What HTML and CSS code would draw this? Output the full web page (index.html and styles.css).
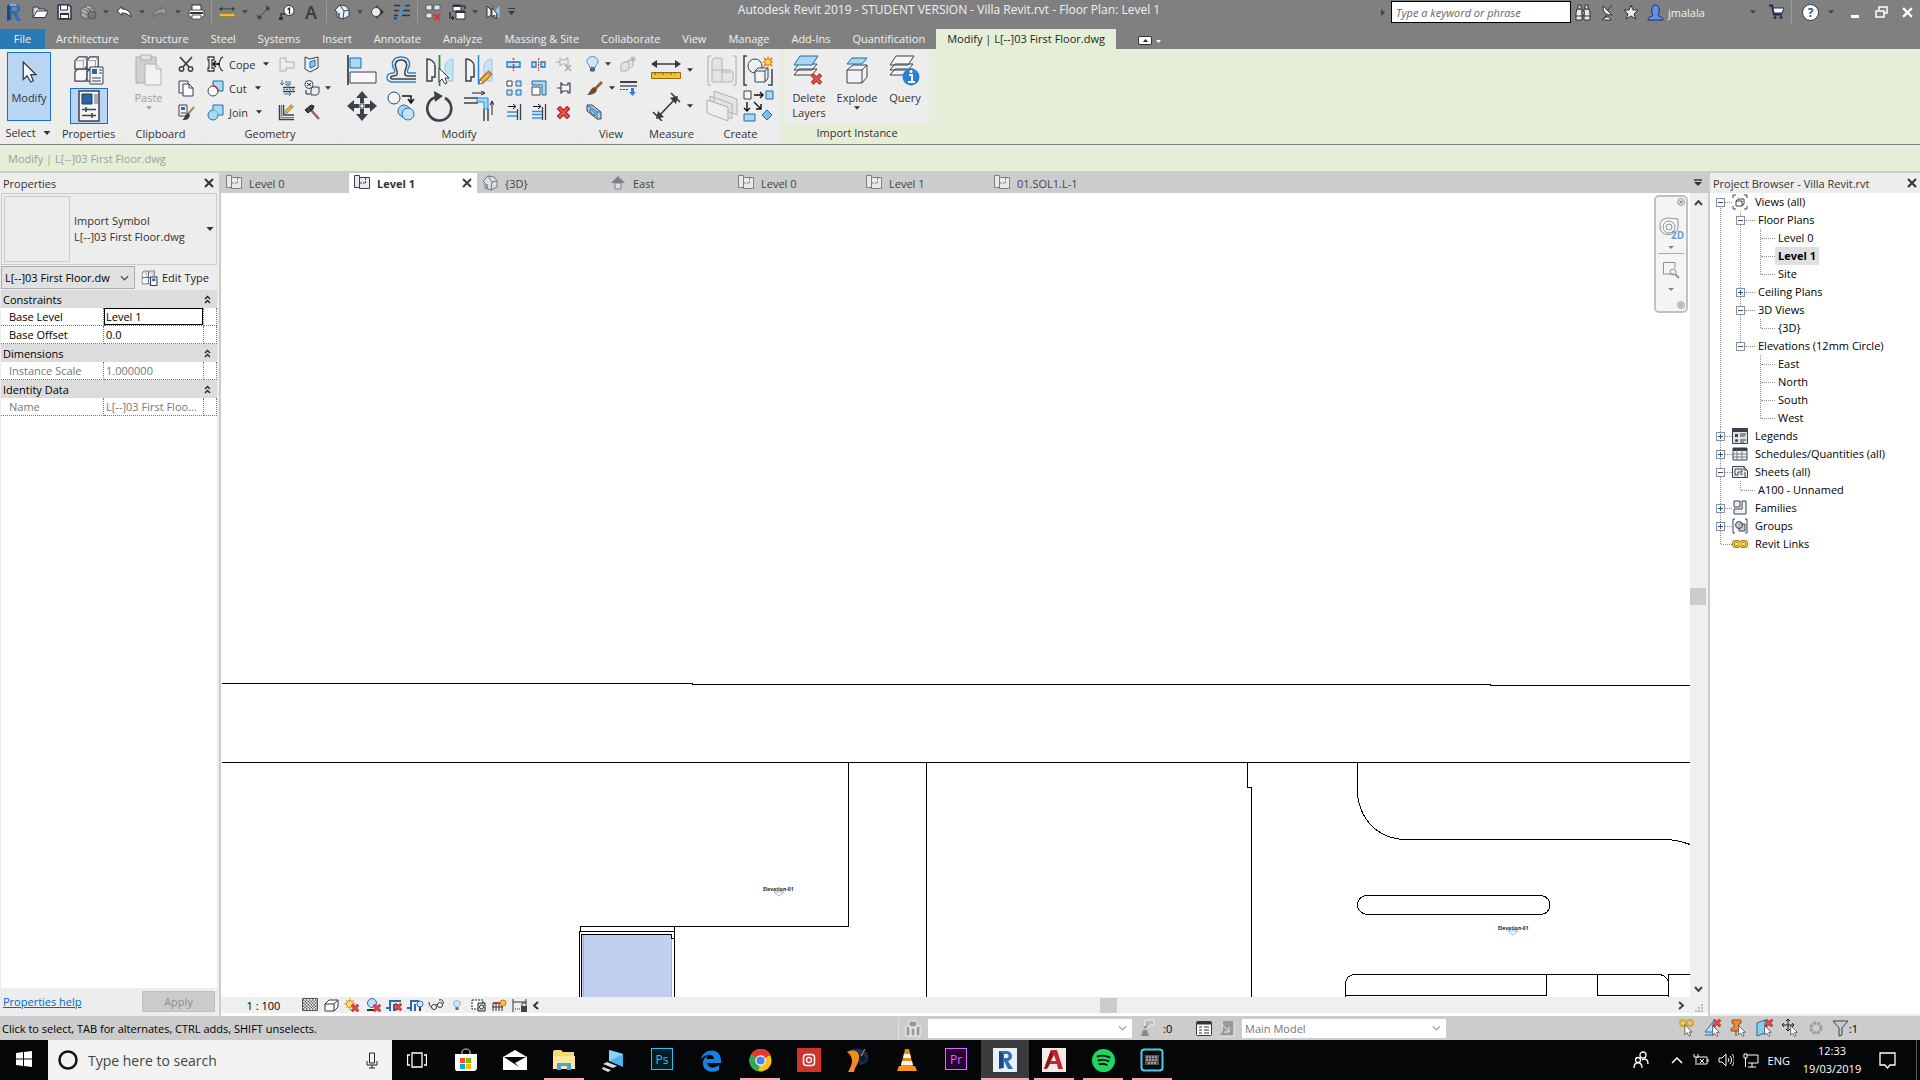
FILE: index.html
```
<!DOCTYPE html>
<html lang="en">
<head>
<meta charset="utf-8">
<title>Autodesk Revit 2019 - Villa Revit.rvt</title>
<link rel="stylesheet" href="styles.css">
</head>
<body>

<!-- shared icons -->
<svg class="defs" aria-hidden="true">
    <symbol id="caret" viewBox="0 0 7 4"><path d="M0 0h7L3.5 4z" fill="currentColor"/></symbol>
    <symbol id="cross" viewBox="0 0 10 10"><path d="M1 1l8 8M9 1l-8 8" fill="none" stroke="currentColor" stroke-width="2"/></symbol>
    <symbol id="down" viewBox="0 0 10 6"><path d="M1 1l4 4 4-4" fill="none" stroke="currentColor" stroke-width="1.5"/></symbol>
    <symbol id="fold" viewBox="0 0 7 9"><path d="M1 4l2.5-2.500L6 4M1 8l2.500-2.500L6 8" fill="none" stroke="#222" stroke-width="1.400"/></symbol>
    <symbol id="plan" viewBox="0 0 16 16"><path d="M5.5 3.5V.5H.5v12h5" fill="#e8e8e8" stroke="currentColor"/><path d="M5.5 2.5h10v11h-10z" fill="#e8eaec" stroke="currentColor"/><path d="M6 8h6M11.5 3v5" stroke="currentColor" stroke-dasharray="2 1"/></symbol>
    <symbol id="cubes" viewBox="0 0 30 30"><g fill="#f4f6f8" stroke="#3b414d" stroke-width="1.300"><path d="M5 1h9v10l-3 3H1V5z"/><path d="M17 1h9v10l-3 3h-9V5z"/><path d="M4 14h10v10l-2 3H1V17z"/><path d="M17 14h9v10l-3 3h-9V17z"/></g><path d="M1 5h9V14M14 5h9v9M14 1l-4 4M26 1l-3 4" fill="none" stroke="#8b929c"/></symbol>
    <symbol id="rx" viewBox="0 0 10 10"><path d="M1 1l8 8M9 1l-8 8" stroke="#a01818" stroke-width="3.500"/><path d="M1.500 1.500l7 7M8.500 1.500l-7 7" stroke="#f15048" stroke-width="2"/></symbol>
    <symbol id="arrow" viewBox="0 0 12 18"><path d="M1 1v14l3-3 3 5 2-1-2-5h4z" fill="#fff" stroke="#333a45"/></symbol>
    <symbol id="house" viewBox="0 0 16 16"><path d="M1 6l5-5 6 1 3 4v6l-6 3-6-2V8z" fill="#e8edf2" stroke="#3b414d"/><path d="M1 6l5-5 4 6-1 8M10 7l5-1" fill="none" stroke="#3b414d"/><path d="M4 13V9l2 0v5" fill="#4a78a8"/></symbol>
    <symbol id="dim" viewBox="0 0 30 30"><path d="M2 21l9 9M20 2l9 9M7 26L25 7" fill="none" stroke="currentColor" stroke-width="1.600"/><path d="M5 28l2-8 6 6zM27 5l-2 8-6-6z" fill="currentColor"/></symbol>
    <symbol id="ruler" viewBox="0 0 30 20"><path d="M1 4h28" stroke="currentColor" stroke-width="1.500"/><path d="M0 4l6-4v8zM30 4l-6-4v8z" fill="currentColor"/><path d="M.5 12.500h29v6H.5z" fill="#f2c230" stroke="#9a6a10"/><path d="M4 12v3M8 12v2M12 12v3M16 12v2M20 12v3M24 12v2" stroke="#7a5510"/></symbol>
    <symbol id="pencil" viewBox="0 0 14 14"><path d="M1 13l1-4 8-8 3 3-8 8z" fill="#f5b43a" stroke="#8a5a18"/><path d="M10 1l3 3-2 2-3-3z" fill="#e98a4c"/><path d="M1 13l1-4 3 3z" fill="#fff" stroke="#8a5a18" stroke-width=".7"/></symbol>
    <symbol id="bulb" viewBox="0 0 14 18"><path d="M4 12C4 9 1 9 1 5.500a6 5 0 0 1 12 0C13 9 10 9 10 12z" fill="#cfe7fb" stroke="#4c83c4"/><path d="M5 13h4v3H5z" fill="#777" stroke="#3b414d"/></symbol>
</svg>

<header class="titlebar">
    <div class="quick">
        <button class="logo" aria-label="Revit"><svg width="18" height="20" viewBox="0 0 18 20"><path d="M4 2h7c5 0 6 8 1 9l4 8h-4L8 12H7v6H4z" fill="#2f6fb5"/><path d="M4 2L2 4v15l3-1V5z" fill="#174a86"/><path d="M7 5h4c2 0 2 4 0 4H7z" fill="#808080"/><path d="M4 2h7l1 2H5z" fill="#6fb0e6"/></svg></button>
        <button aria-label="Open"><svg width="17" height="14" viewBox="0 0 17 14"><path d="M1 12V2h5l1 2h6v2" fill="#cfd6dd" stroke="#333a45"/><path d="M1 12.500L5 6h11l-3 6.500z" fill="#fff" stroke="#333a45"/></svg></button>
        <button aria-label="Save"><svg width="15" height="16" viewBox="0 0 15 16"><path d="M1 1h11l2 2v12H1z" fill="#dfe5eb" stroke="#2d3440" stroke-width="1.500"/><path d="M3.500 1h7v5h-7z" fill="#fff" stroke="#2d3440"/><path d="M3 9h9v6H3z" fill="#2d3440"/><path d="M4 11h7v3H4z" fill="#fff"/></svg></button>
        <button aria-label="Synchronize"><svg width="17" height="16" viewBox="0 0 17 16"><path d="M1 4l7-3 6 3v8l-7 3-6-3z" fill="#b4b4b4" stroke="#5e5e5e"/><path d="M1 4l6 3 7-3M7 7v8M4 3l6 2v4M1 8l6 3" fill="none" stroke="#666"/><circle cx="12" cy="11" r="4" fill="#777" stroke="#555"/></svg></button>
        <button class="drop" aria-label="Synchronize menu"><svg width="6" height="4"><use href="#caret"/></svg></button>
        <button aria-label="Undo"><svg width="16" height="12" viewBox="0 0 16 12"><path d="M1 5l5-4.500V3c5 0 9 3 9 8-3-3-5-4-9-4v2.500z" fill="#fff" stroke="#2d3440"/></svg></button>
        <button class="drop" aria-label="Undo menu"><svg width="6" height="4"><use href="#caret"/></svg></button>
        <button aria-label="Redo"><svg width="16" height="12" viewBox="0 0 16 12"><path d="M15 5L10 .5V3C5 3 1 6 1 11c3-3 5-4 9-4v2.500z" fill="#999" stroke="#666"/></svg></button>
        <button class="drop" aria-label="Redo menu"><svg width="6" height="4"><use href="#caret"/></svg></button>
        <button aria-label="Print"><svg width="17" height="16" viewBox="0 0 17 16"><path d="M4 1h9v6H4z" fill="#fff" stroke="#333"/><path d="M1 6h15v7H1z" fill="#fff" stroke="#444"/><path d="M2 9h13" stroke="#333" stroke-width="2"/><path d="M4 11h9v4H4z" fill="#fff" stroke="#555"/></svg></button>
        <i class="sep"></i>
        <button aria-label="Measure"><svg class="ink" width="16" height="12" viewBox="0 0 30 20"><use href="#ruler"/></svg></button>
        <button class="drop" aria-label="Measure menu"><svg width="6" height="4"><use href="#caret"/></svg></button>
        <button aria-label="Aligned dimension"><svg class="ink" width="16" height="16"><use href="#dim"/></svg></button>
        <button aria-label="Tag"><svg width="16" height="15" viewBox="0 0 16 15"><path d="M2 13V9h4" fill="none" stroke="#2d3440" stroke-width="1.300"/><path d="M0 12h4v3H0z" fill="#2d3440"/><circle cx="10" cy="5.500" r="5" fill="#fff" stroke="#2d3440"/><path d="M8.500 4.500L10.500 3v6" fill="none" stroke="#222" stroke-width="1.300"/></svg></button>
        <button class="letter">A</button>
        <i class="sep"></i>
        <button aria-label="3D view"><svg width="16" height="16"><use href="#house"/></svg></button>
        <button class="drop" aria-label="3D menu"><svg width="6" height="4"><use href="#caret"/></svg></button>
        <button aria-label="Section"><svg width="14" height="14" viewBox="0 0 14 14"><path d="M5 0l8 7-8 7z" fill="#2d3440"/><circle cx="5" cy="7" r="4.500" fill="#e8ecef" stroke="#444"/></svg></button>
        <button aria-label="Thin lines"><svg width="18" height="16" viewBox="0 0 18 16"><path d="M1 1.500h6M11 1.500h6M1 6.500h5M10 6.500h7M1 11.500h4M9 11.500h8M1 14.500h3" stroke="#2d3440" stroke-width="1.500"/><path d="M12 0L5 16" stroke="#3d9bf0" stroke-width="1.500"/></svg></button>
        <i class="sep"></i>
        <button aria-label="Close hidden"><svg width="16" height="17" viewBox="0 0 16 17"><path d="M1 1h6v5H1zM9 1h6v5H9zM1 9h6v5H1z" fill="#e2e6ea" stroke="#555d68"/><path d="M9 10l6 6M15 10l-6 6" stroke="#e03030" stroke-width="2"/></svg></button>
        <button aria-label="Switch windows"><svg width="17" height="17" viewBox="0 0 17 17"><path d="M4 1h8v6H4zM7 7h9v8H7z" fill="#fff" stroke="#2d3440"/><path d="M4 2h8M7 8h9" stroke="#2d3440" stroke-width="2"/><path d="M1 8v6h4M3 12l2 2-2 2M13 2h3v3" fill="none" stroke="#111"/></svg></button>
        <button class="drop" aria-label="Switch menu"><svg width="6" height="4"><use href="#caret"/></svg></button>
        <button aria-label="Mirror"><svg width="15" height="15" viewBox="0 0 15 15"><path d="M1 1l4 4v5l-4 3z" fill="#eee" stroke="#2d3440"/><path d="M13.500 1l-4 4v5l4 3z" fill="#8fc7ea"/><path d="M7 0v15" stroke="#2c8a2c"/><path d="M6 3v9l2-2 2 4 1-1-1-3h2z" fill="#fff" stroke="#333"/></svg></button>
        <button class="drop" aria-label="Customize"><svg width="9" height="8" viewBox="0 0 9 8"><path d="M1 .5h7" stroke="#333a45"/><path d="M1 3h7L4.500 7z" fill="#333a45"/></svg></button>
    </div>
    <div class="title">Autodesk Revit 2019 - STUDENT VERSION - Villa Revit.rvt - Floor Plan: Level 1</div>
    <div class="account">
        <svg width="4" height="7" viewBox="0 0 4 7"><path d="M0 0l4 3.500L0 7z" fill="#444"/></svg>
        <input type="text" placeholder="Type a keyword or phrase" aria-label="Search help">
        <button aria-label="Search"><svg width="16" height="17" viewBox="0 0 16 17"><path d="M2 5h5v11H1V9zM9 5h5l1 4v7H9z" fill="#e8e8ea" stroke="#2d3440"/><path d="M3 1h3v4H3zM10 1h3v4h-3zM7 7h2v4H7z" fill="#d9dce0" stroke="#2d3440"/><path d="M1 12h6M9 12h6" stroke="#2d3440"/></svg></button>
        <button aria-label="Communication center"><svg width="15" height="17" viewBox="0 0 15 17"><path d="M3 2c0 7 3 9 9 9z" fill="#f2f2f2" stroke="#2d3440"/><path d="M7 7l5-6M7 10l-3 5M2 16h9l-2-3H5z" fill="#eee" stroke="#2d3440"/></svg></button>
        <button aria-label="Favorites"><svg width="16" height="16" viewBox="0 0 16 16"><path d="M8 1l2 5h5l-4 4 2 5-5-3-5 3 2-5-4-4h5z" fill="#e9ebee" stroke="#2d3440"/></svg></button>
        <button class="user"><svg width="17" height="17" viewBox="0 0 17 17"><path d="M1 16c0-4 5-3 5-5C4 9 4 1 8.500 1S13 9 11 11c0 2 5 1 5 5z" fill="#5f91ea" stroke="#1c2a5c"/></svg>jmalala<svg class="far" width="6" height="4"><use href="#caret"/></svg></button>
        <button aria-label="App store"><svg width="17" height="16" viewBox="0 0 17 16"><path d="M1 1.500h3l2 9h8" fill="none" stroke="#1c2a4c" stroke-width="2"/><path d="M5 4h11l-2 5H6z" fill="#fff" stroke="#1c2a6c"/><circle cx="7" cy="13.500" r="1.500" fill="#1c2a6c"/><circle cx="13" cy="13.500" r="1.500" fill="#1c2a6c"/></svg></button>
        <i class="sep"></i>
        <button class="help" aria-label="Help">?</button>
        <svg class="tiny" width="6" height="4"><use href="#caret"/></svg>
        <button class="win" aria-label="Minimize"><svg width="9" height="12"><path d="M0 9h8v3H0z" fill="#fff"/></svg></button>
        <button class="win" aria-label="Restore"><svg width="13" height="12" viewBox="0 0 13 12"><path d="M4 4V1h8v6H9M1 5h8v6H1z" fill="none" stroke="#fff" stroke-width="1.500"/></svg></button>
        <button class="win" aria-label="Close"><svg class="white" width="11" height="11"><use href="#cross"/></svg></button>
    </div>
</header>

<nav class="ribbon-tabs">
    <button class="file">File</button>
    <button>Architecture</button>
    <button>Structure</button>
    <button>Steel</button>
    <button>Systems</button>
    <button>Insert</button>
    <button>Annotate</button>
    <button>Analyze</button>
    <button>Massing &amp; Site</button>
    <button>Collaborate</button>
    <button>View</button>
    <button>Manage</button>
    <button>Add-Ins</button>
    <button>Quantification</button>
    <button class="active">Modify | L[--]03 First Floor.dwg</button>
    <button class="collapse" aria-label="Minimize ribbon"><svg width="24" height="9" viewBox="0 0 24 9"><rect x=".5" y=".5" width="13" height="8" rx="1.500" fill="#fff" stroke="#333"/><path d="M5 6h5L7.500 3z" fill="#222"/><path d="M18 4h5l-2.500 3z" fill="#fff"/></svg></button>
</nav>

<section class="ribbon">
    <div class="panel select">
        <div class="body">
            <button class="modify"><svg width="15" height="24"><use href="#arrow"/></svg>Modify</button>
        </div>
        <h3>Select <svg width="8" height="4"><use href="#caret"/></svg></h3>
    </div>
    <div class="panel props">
        <div class="body two">
            <button aria-label="Type properties"><svg width="30" height="30" viewBox="0 0 30 30"><use href="#cubes" width="28" height="30"/><path d="M16 12h13v17H16z" fill="#f4f4f4" stroke="#3b414d"/><path d="M18 14h5v5h-5z" fill="#2a65a8"/><path d="M25 15h3M25 18h3M18 23h9M18 26h9" stroke="#3b414d"/></svg></button>
            <button class="on" aria-label="Properties"><svg width="22" height="32" viewBox="0 0 22 32"><path d="M1 1h20v30H1z" fill="#f4f4f4" stroke="#3b414d" stroke-width="1.500"/><path d="M4 4h10v10H4z" fill="#2a65a8" stroke="#274059"/><path d="M16 4h4v10h-4z" fill="#a8aeb6"/><path d="M4 19.500h14M4 25.500h14M8 17v5M14 23v5" stroke="#3b414d" stroke-width="1.500"/></svg></button>
        </div>
        <h3>Properties</h3>
    </div>
    <div class="panel clip">
        <div class="body">
            <button class="tall off"><svg width="28" height="32" viewBox="0 0 28 32"><path d="M1 3h20v26H1z" fill="#d0d0d0" stroke="#aaa"/><path d="M6 1h10v5H6z" fill="#e4e4e4" stroke="#aaa"/><path d="M10 10h11l5 5v16H10z" fill="#f2f2f2" stroke="#b4b4b4"/><path d="M21 10v5h5" fill="none" stroke="#b4b4b4"/></svg>Paste<svg width="6" height="4"><use href="#caret"/></svg></button>
            <div class="three">
                <button aria-label="Cut to clipboard"><svg width="16" height="16" viewBox="0 0 16 16"><path d="M2 1l9 10M14 1L5 11" stroke="#3b414d" stroke-width="1.800"/><circle cx="3.500" cy="13" r="2.200" fill="none" stroke="#3b414d" stroke-width="1.500"/><circle cx="12.500" cy="13" r="2.200" fill="none" stroke="#3b414d" stroke-width="1.500"/></svg></button>
                <button aria-label="Copy to clipboard"><svg width="16" height="17" viewBox="0 0 16 17"><path d="M1 1h9v12H1z" fill="#eef0f2" stroke="#3b414d"/><path d="M5 4h6l4 4v8H5z" fill="#fafafa" stroke="#3b414d"/><path d="M11 4v4h4" fill="none" stroke="#3b414d"/></svg></button>
                <button aria-label="Match type"><svg width="17" height="17" viewBox="0 0 17 17"><path d="M1 1h8v11H1z" fill="#f4f4f4" stroke="#3b414d"/><path d="M3 3h4v3H3z" fill="#2a75b8"/><path d="M3 9h5" stroke="#3b414d"/><path d="M16 3l-6 7" stroke="#b98342" stroke-width="2"/><path d="M10 9l2 2c-1 5-4 5-8 5 3-1 2-5 6-7z" fill="#3b414d"/></svg></button>
            </div>
        </div>
        <h3>Clipboard</h3>
    </div>
    <div class="panel geometry">
        <div class="body">
            <div class="three named">
                <button><svg width="17" height="16" viewBox="0 0 17 16"><path d="M1 1h6v3H5v8h2v3H1v-3h1V4H1zM16 1c-4 1-2 5-5 7 3 2 1 6 5 7" fill="#f4f4f4" stroke="#3b414d" stroke-width="1.300"/><path d="M13 8H6M9 5L6 8l3 3" fill="none" stroke="#000" stroke-width="1.300"/></svg>Cope<svg width="6" height="4"><use href="#caret"/></svg></button>
                <button><svg width="17" height="17" viewBox="0 0 17 17"><path d="M6 1h10v10H6z" fill="#a8d9f3" stroke="#1d6ca8"/><circle cx="6" cy="11" r="5" fill="#fff" stroke="#444"/><path d="M6 6a5 5 0 0 1 5 5" fill="none" stroke="#e02020" stroke-width="1.500"/></svg>Cut<svg width="6" height="4"><use href="#caret"/></svg></button>
                <button><svg width="17" height="17" viewBox="0 0 17 17"><path d="M6 1h10v10h-5A5 5 0 1 1 6 6z" fill="#a8d9f3" stroke="#1d6ca8"/><path d="M6 6a5 5 0 0 1 5 5" fill="none" stroke="#6cb2dc"/></svg>Join<svg width="6" height="4"><use href="#caret"/></svg></button>
            </div>
            <div class="three">
                <button aria-label="Wall joins"><svg width="16" height="15" viewBox="0 0 16 15"><path d="M1 1h6v4h8v6H7v3H1z" fill="#ececec" stroke="#b0b0b0"/></svg></button>
                <button aria-label="Split face"><svg width="16" height="16" viewBox="0 0 16 16"><path d="M3 0v5M1 3l2 2 2-2M7 1v4h4V1M9 1v4" fill="none" stroke="#2878c8"/><path d="M4 7.500h12M4 11.500h12" stroke="#3b414d" stroke-width="1.300"/><path d="M4 9.500h12" stroke="#777" stroke-dasharray="2 1"/><path d="M5 14h7M10 12l2 2-2 2" fill="none" stroke="#2878c8"/></svg></button>
                <button aria-label="Paint"><svg width="17" height="17" viewBox="0 0 17 17"><path d="M1.500 1v14.500H16M5.500 1v10H16" fill="none" stroke="#3b414d" stroke-width="1.500"/><path d="M3.500 1v12.500H16" fill="none" stroke="#3492dd"/><use href="#pencil" x="6" y="0" width="10" height="10"/></svg></button>
            </div>
            <div class="three">
                <button aria-label="Beam joins"><svg width="15" height="17" viewBox="0 0 15 17"><path d="M1 1l5 2 4-1 4-1v11l-8 4-5-3z" fill="#e8edf2" stroke="#3b414d"/><path d="M6 6l5-2v6l-5 2z" fill="#8ec9ee" stroke="#1d6ca8"/></svg></button>
                <button aria-label="Demolish"><svg width="16" height="17" viewBox="0 0 16 17"><circle cx="5" cy="4.500" r="4" fill="#fff" stroke="#3b414d"/><path d="M3 3l4 3M7 3L3 6M2 10v4h4" fill="none" stroke="#222"/><path d="M7 9l2-2h6v6l-2 2H7z" fill="#e8edf2" stroke="#3b414d"/></svg></button>
                <button aria-label="Hammer"><svg width="16" height="16" viewBox="0 0 16 16"><path d="M7 6l8 9" stroke="#94605c" stroke-width="2.500"/><path d="M1 6l6-5 3 1-1 3-5 4z" fill="#3b414d" stroke="#222"/></svg></button>
            </div>
            <svg class="mid" width="6" height="4"><use href="#caret"/></svg>
        </div>
        <h3>Geometry</h3>
    </div>
    <div class="panel edit">
        <div class="body">
            <div class="big-grid">
                <button aria-label="Align"><svg width="30" height="30" viewBox="0 0 30 30"><path d="M1 0v30" stroke="#222" stroke-width="1.500"/><path d="M3 3h11v10H3z" fill="#a8d9f3" stroke="#1d6ca8"/><path d="M3 17h26v11H3z" fill="#f7f7f7" stroke="#3b414d"/></svg></button>
                <button aria-label="Offset"><svg width="30" height="28" viewBox="0 0 30 28"><path d="M30 17h-7c-2 0-2-2-1-4C26 6 22 1 15 1S4 6 8 13c1 2 1 4-1 4-8 0-8 9 0 9h23" fill="none" stroke="#2a87cc" stroke-width="1.500"/><path d="M30 20h-8c-4 0-4-3-2-8 2-4 0-8-5-8s-7 4-5 8c2 5 2 8-3 8-3 0-3 3 0 3h23" fill="none" stroke="#3b414d" stroke-width="1.500"/></svg></button>
                <button aria-label="Mirror pick axis"><svg width="28" height="31" viewBox="0 0 28 31"><path d="M1 4c4 0 8 3 8 7v11H6v4H1z" fill="#f2f2f2" stroke="#3b414d" stroke-width="1.500"/><path d="M27 4c-4 0-8 3-8 7v11h3v4h5z" fill="#c4e3f4" stroke="#9cc9e2"/><path d="M13.500 0v31" stroke="#2f9130" stroke-width="1.800"/><use href="#arrow" x="12" y="12" width="12" height="18"/></svg></button>
                <button aria-label="Mirror draw axis"><svg width="28" height="31" viewBox="0 0 28 31"><path d="M1 4c4 0 8 3 8 7v11H6v4H1z" fill="#f2f2f2" stroke="#3b414d" stroke-width="1.500"/><path d="M27 4c-4 0-8 3-8 7v11h3v4h5z" fill="#c4e3f4" stroke="#9cc9e2"/><path d="M13.500 0v29" stroke="#2a87e0" stroke-width="1.500"/><use href="#pencil" x="13" y="15" width="15" height="15"/></svg></button>
                <button aria-label="Move"><svg width="30" height="30" viewBox="0 0 30 30"><path d="M15 0l6 7h-4v5h-4V7H9zM15 30l6-7h-4v-5h-4v5H9zM0 15l7-6v4h5v4H7v4zM30 15l-7-6v4h-5v4h5v4z" fill="#3b414d"/><path d="M13 13h4v4h-4z" fill="#fff" stroke="#3b414d"/></svg></button>
                <button aria-label="Copy"><svg width="28" height="30" viewBox="0 0 28 30"><circle cx="7" cy="7" r="6" fill="#f4f4f4" stroke="#3b414d"/><path d="M15 5h9v6M21 8l3 4 3-4" fill="none" stroke="#111" stroke-width="1.500"/><circle cx="17" cy="20" r="6" fill="#a8d9f3" stroke="#1d6ca8"/><circle cx="21" cy="23" r="6" fill="#bfe3f6" stroke="#1d6ca8"/></svg></button>
                <button aria-label="Rotate"><svg width="28" height="31" viewBox="0 0 28 31"><path d="M10 6a12 12 0 1 0 9 1" fill="none" stroke="#3b414d" stroke-width="2.600"/><path d="M8 0l9 5-8 6z" fill="#3b414d"/></svg></button>
                <button aria-label="Trim corner"><svg width="30" height="30" viewBox="0 0 30 30"><path d="M0 7h14M0 12h14M20 18v12M24 18v12" stroke="#3b414d" stroke-width="1.500"/><path d="M13 7h11v11h-4v-7h-7z" fill="#a8d9f3" stroke="#2a87e0"/><path d="M8 2h12M17 0l4 2-4 2M28 24V10M26 14l2-4 2 4" fill="none" stroke="#222"/></svg></button>
            </div>
            <div class="small-grid">
                <button aria-label="Split"><svg width="15" height="13" viewBox="0 0 15 13"><path d="M1 4h13v5H1z" fill="#c6e4f5" stroke="#1d78bd" stroke-width="1.300"/><path d="M7.500 0v13" stroke="#e03030" stroke-width="1.500" stroke-dasharray="2 1"/></svg></button>
                <button aria-label="Split with gap"><svg width="15" height="13" viewBox="0 0 15 13"><path d="M1 4h4v5H1zM10 4h4v5h-4z" fill="#c6e4f5" stroke="#1d78bd" stroke-width="1.300"/><path d="M7.500 0v13" stroke="#e03030" stroke-dasharray="2 1"/></svg></button>
                <button aria-label="Unpin"><svg width="16" height="16" viewBox="0 0 16 16"><path d="M0 6h4M4 2v8l2-2h4v2h2V2h-2v2H6z" fill="#eee" stroke="#aaa"/><path d="M9 9l6 6M15 9l-6 6" stroke="#aaa" stroke-width="1.500"/></svg></button>
                <button aria-label="Array"><svg width="16" height="16" viewBox="0 0 16 16"><g fill="#bfe0f3" stroke="#1d6ca8"><path d="M1 1h5v5H1z" fill="#fff" stroke="#3b414d"/><path d="M10 1h5v5h-5zM1 10h5v5H1zM10 10h5v5h-5z"/></g></svg></button>
                <button aria-label="Scale"><svg width="16" height="16" viewBox="0 0 16 16"><path d="M1 1h14v14h-4V5H1z" fill="#a8d9f3" stroke="#1d6ca8"/><path d="M1 7h8v8H1z" fill="#fff" stroke="#3b414d"/></svg></button>
                <button aria-label="Pin"><svg width="14" height="12" viewBox="0 0 14 12"><path d="M0 6h4M4 1v10l2-2h5v2h2V1h-2v2H6z" fill="#f4f4f4" stroke="#3b414d" stroke-width="1.200"/></svg></button>
                <button aria-label="Trim single"><svg width="16" height="16" viewBox="0 0 16 16"><path d="M14.500 0v16M11.500 5v11" stroke="#3b414d" stroke-width="1.300"/><path d="M2 2.500h8M7 0l3 2.500L7 5" fill="none" stroke="#111"/><path d="M1 8h10M1 12h10" stroke="#3492dd" stroke-width="1.600"/></svg></button>
                <button aria-label="Trim multiple"><svg width="16" height="16" viewBox="0 0 16 16"><path d="M14.500 0v16M11.500 3v13" stroke="#3b414d" stroke-width="1.300"/><path d="M2 2.500h8M7 0l3 2.500L7 5" fill="none" stroke="#111"/><path d="M1 7.500h10M1 10.500h10M1 14h10" stroke="#3492dd" stroke-width="1.400"/></svg></button>
                <button aria-label="Delete"><svg width="13" height="13"><use href="#rx"/></svg></button>
            </div>
        </div>
        <h3>Modify</h3>
    </div>
    <div class="panel view">
        <div class="body">
            <div class="three">
                <button class="drops" aria-label="Hide in view"><svg width="13" height="17"><use href="#bulb"/></svg><svg width="6" height="4"><use href="#caret"/></svg></button>
                <button class="drops" aria-label="Override graphics"><svg width="17" height="15" viewBox="0 0 17 15"><path d="M16 1L9 8" stroke="#9a6235" stroke-width="3"/><path d="M8 6l3 3c-1 4-6 5-10 5 3-2 3-6 7-8z" fill="#6b4a30"/></svg><svg width="6" height="4"><use href="#caret"/></svg></button>
                <button class="drops" aria-label="Selection box"><svg width="17" height="16" viewBox="0 0 17 16"><path d="M1 1l5 0 9 7v7l-4 0-10-8z" fill="#a8d0ee" stroke="#3b414d"/><path d="M1 1l10 7v7M11 8h4M4 5v3l5 4V9z" fill="none" stroke="#2a6a9c"/></svg></button>
            </div>
            <div class="three">
                <button aria-label="Displace elements"><svg width="17" height="16" viewBox="0 0 17 16"><path d="M1 8l3-2h5v7l-3 2H1zM6 6l3-2h4v6l-2 2" fill="#e4e4e4" stroke="#b0b0b0"/><path d="M13 0v6M10 3h6M11 1l4 4M15 1l-4 4" stroke="#b0b0b0"/></svg></button>
                <button aria-label="Linework"><svg width="17" height="16" viewBox="0 0 17 16"><path d="M0 2h17" stroke="#3b414d" stroke-width="2"/><path d="M0 6h17" stroke="#3b414d" stroke-width="1.300"/><path d="M0 9.500h9" stroke="#3b414d" stroke-dasharray="2 1"/><path d="M11 8h3v4h2l-3.500 4L9 12h2z" fill="#2a87e0"/></svg></button>
            </div>
        </div>
        <h3>View</h3>
    </div>
    <div class="panel measure">
        <div class="body two">
            <button class="drops" aria-label="Measure"><svg class="ink" width="30" height="20"><use href="#ruler"/></svg><svg width="6" height="4"><use href="#caret"/></svg></button>
            <button class="drops" aria-label="Dimension"><svg class="ink" width="30" height="30"><use href="#dim"/></svg><svg width="6" height="4"><use href="#caret"/></svg></button>
        </div>
        <h3>Measure</h3>
    </div>
    <div class="panel create">
        <div class="body quad">
            <button aria-label="Create parts"><svg width="30" height="31" viewBox="0 0 30 31"><path d="M4 1H1v29h3M26 1h3v29h-3" fill="none" stroke="#aaa"/><path d="M5 5l2-2h8v12h9l2 2v8l-2 2H5z" fill="#e4e4e4" stroke="#b4b4b4"/><path d="M5 15h10v12M15 17h9" fill="none" stroke="#b4b4b4"/></svg></button>
            <button aria-label="Create group"><svg width="31" height="31" viewBox="0 0 31 31"><path d="M4 1H1v29h3M25 30h4V14" fill="none" stroke="#3b414d" stroke-width="1.500"/><circle cx="12" cy="11" r="7" fill="#eef0f2" stroke="#3b414d"/><path d="M12 16l3-3h10v10l-3 4H12z" fill="#f4f4f4" stroke="#3b414d"/><path d="M12 16h10v11M22 16l3-3" fill="none" stroke="#3b414d"/><path d="M25 0l1 4 4-2-2 4 3 1-3 1 2 4-4-2-1 3-1-3-4 2 2-4-3-1 3-1-2-4 4 2z" fill="#f07a18"/><circle cx="25" cy="7" r="2.500" fill="#ffe23a"/></svg></button>
            <button aria-label="Create assembly"><svg width="32" height="32" viewBox="0 0 32 32"><path d="M8 1l23 8v16L8 16zM4 6l22 8v15L4 20z" fill="#e4e4e4" stroke="#b0b0b0"/><path d="M1 10l21 7v14L1 23z" fill="#eee" stroke="#b0b0b0"/></svg></button>
            <button aria-label="Create similar"><svg width="31" height="32" viewBox="0 0 31 32"><path d="M1 1h7v8H1z" fill="#f4f4f4" stroke="#3b414d"/><path d="M23 1h7v8h-7zM1 24h11v7H1z" fill="#a8d9f3" stroke="#1d6ca8"/><path d="M24 20l5 5-5 5-5-5z" fill="#7dbdea" stroke="#1d6ca8"/><path d="M11 5h9M17 2l3 3-3 3M4 12v9M1 18l3 3 3-3M11 12l7 7M18 14v5h-5" fill="none" stroke="#111" stroke-width="1.400"/></svg></button>
        </div>
        <h3>Create</h3>
    </div>
    <div class="panel import">
        <div class="body">
            <button class="tall"><svg width="32" height="32" viewBox="0 0 32 32"><path d="M1 21l5-6h18l-5 6zM1 16l5-6h18l-5 6z" fill="#f0f0f0" stroke="#3b414d"/><path d="M1 11l6-9h18l-6 9z" fill="#a8d9f3" stroke="#1d6ca8"/><use href="#rx" x="18" y="19" width="11" height="12"/></svg>Delete<br>Layers</button>
            <button class="tall"><svg width="24" height="32" viewBox="0 0 24 32"><path d="M2 16l6-5h14v12l-5 6H2z" fill="#f0f2f4" stroke="#3b414d"/><path d="M2 16h15v13M17 16l5-5" fill="none" stroke="#3b414d"/><path d="M2 10l5-6h15l-5 6z" fill="#a8d9f3" stroke="#1d6ca8"/></svg>Explode<svg width="6" height="4"><use href="#caret"/></svg></button>
            <button class="tall"><svg width="32" height="32" viewBox="0 0 32 32"><path d="M1 21l5-6h18l-5 6zM1 16l5-6h18l-5 6zM1 11l6-9h18l-6 9z" fill="#f4f4f4" stroke="#3b414d"/><circle cx="22" cy="23" r="8.500" fill="#2a80d6"/><path d="M20 21h3v7M19 28h7" fill="none" stroke="#fff" stroke-width="2"/><circle cx="22" cy="17.500" r="1.500" fill="#fff"/></svg>Query</button>
        </div>
        <h3>Import Instance</h3>
    </div>
</section>

<div class="options">Modify | L[--]03 First Floor.dwg</div>

<main class="workspace">
    <aside class="properties">
        <div class="palette-head">Properties<button aria-label="Close properties"><svg width="10" height="10"><use href="#cross"/></svg></button></div>
        <button class="type-box">
            <span class="thumb"></span>
            <span class="type-name">Import Symbol<br>L[--]03 First Floor.dwg</span>
            <svg width="8" height="4"><use href="#caret"/></svg>
        </button>
        <div class="type-row">
            <div class="combo filter">
                <select aria-label="Element filter"><option>L[--]03 First Floor.dw</option></select>
                <svg width="9" height="6"><use href="#down"/></svg>
            </div>
            <button class="edit-type"><svg width="17" height="16" viewBox="0 0 30 30"><use href="#cubes" width="28" height="30"/><path d="M17 13h12v16H17z" fill="#fff" stroke="#3b414d" stroke-width="2"/><path d="M20 16h6v5h-6z" fill="#2a65a8"/></svg>Edit Type</button>
        </div>
        <div class="grid-area">
            <table class="props-table">
                <colgroup><col class="c-name"><col><col class="c-more"></colgroup>
                <tr class="group"><th colspan="2">Constraints</th><th><svg width="7" height="9"><use href="#fold"/></svg></th></tr>
                <tr><td><label for="level">Base Level</label></td><td><input class="focus" id="level" value="Level 1"></td><td></td></tr>
                <tr><td><label for="offset">Base Offset</label></td><td><input id="offset" value="0.0"></td><td></td></tr>
                <tr class="group"><th colspan="2">Dimensions</th><th><svg width="7" height="9"><use href="#fold"/></svg></th></tr>
                <tr class="dim"><td>Instance Scale</td><td>1.000000</td><td></td></tr>
                <tr class="group"><th colspan="2">Identity Data</th><th><svg width="7" height="9"><use href="#fold"/></svg></th></tr>
                <tr class="dim"><td>Name</td><td>L[--]03 First Floo...</td><td></td></tr>
            </table>
        </div>
        <div class="props-foot"><a href="#">Properties help</a><button disabled>Apply</button></div>
    </aside>

    <section class="document">
        <div class="doc-tabs">
            <button><svg width="16" height="16"><use href="#plan"/></svg>Level 0</button>
            <button class="current"><svg width="16" height="16"><use href="#plan"/></svg>Level 1<svg class="close" width="10" height="10"><use href="#cross"/></svg></button>
            <button><svg class="faded" width="16" height="16"><use href="#house"/></svg>{3D}</button>
            <button><svg width="16" height="16" viewBox="0 0 16 16"><path d="M8 1l7 7H1z" fill="#7c8088"/><path d="M5 8h6v6H5z" fill="#e0e0e0" stroke="#7c8088"/></svg>East</button>
            <button><svg width="16" height="16"><use href="#plan"/></svg>Level 0</button>
            <button><svg width="16" height="16"><use href="#plan"/></svg>Level 1</button>
            <button><svg width="16" height="16"><use href="#plan"/></svg>01.SOL1.L-1</button>
            <svg class="more" width="8" height="8" viewBox="0 0 8 8"><path d="M0 1h8" stroke="#333" stroke-width="1.500"/><path d="M0 3h8L4 7z" fill="#333"/></svg>
        </div>
        <div class="canvas">
            <svg class="drawing" viewBox="221 193 1469 804" preserveAspectRatio="xMinYMin slice">
                <path d="M582 935h90v70h-90z" fill="#c2d0ef"/>
                <path d="M583.500 935v70M671.500 938v66" stroke="#9fb3e0" fill="none"/>
                <g class="lines">
                    <path d="M222 683.500H692V684.500H1490V685.500H1690"/>
                    <path d="M222 762.500H1690"/>
                    <path d="M848.500 762V926.500H580.500V931.500M579.500 1000V931.500H674.500M674.500 926V1000M581.500 1000V934.500H671.500V938.500H674.500"/>
                    <path d="M926.500 762V1000M1247.500 762V787.500H1251.500V1000"/>
                    <path d="M1357.500 762V793Q1359 815 1375 829Q1388 839.500 1406 839.500H1665Q1678 840 1690 844.500"/>
                    <path d="M1366 895.500H1542Q1550 898 1550 905Q1549 914.500 1540 914.500H1366Q1357.500 912 1357.500 905Q1357.500 897 1366 895.500z"/>
                    <path d="M1345.500 1000V984Q1346 975 1355 974.500H1659Q1666 975 1668.500 982V995.500H1597.500V974.500M1345.500 995.500H1546.500V974.500M1668.500 1000V974.500H1690"/>
                </g>
                <g class="tags">
                    <text x="763" y="891">Elevation-01</text>
                    <path d="M774 892h10l-5 4z"/>
                    <text x="1498" y="930">Elevation-01</text>
                    <path d="M1508 931h10l-5 4z"/>
                </g>
            </svg>
            <div class="navbar">
                <svg width="30" height="114" viewBox="0 0 30 114" fill="none" stroke="#8b8f94">
                    <circle cx="25" cy="5" r="3.500" fill="#ddd" stroke="#aaa"/><path d="M23.500 3.500l3 3M26.500 3.500l-3 3" stroke="#888"/>
                    <path d="M22 22V30c0 9-18 11-18 0s8-9 18-8z" fill="#f8f8f8"/><circle cx="13" cy="30" r="6"/><circle cx="13" cy="30" r="3"/>
                    <path d="M12 49h6l-3 3z" fill="#888" stroke="none"/><path d="M2 56.500h26" stroke="#aaa"/>
                    <path d="M18 77H7.500V65.500H19V71"/><circle cx="17" cy="75" r="3"/><path d="M19 77l4 4" stroke-width="2"/>
                    <path d="M12 91h6l-3 3z" fill="#888" stroke="none"/><circle cx="25" cy="108" r="3.500" fill="#ddd" stroke="#aaa"/><path d="M23 107h4M23 109h4"/>
                    <text x="15" y="42">2D</text>
                </svg>
            </div>
        </div>
        <div class="vscroll">
            <svg width="9" height="6" viewBox="0 0 9 6"><path d="M1 5l3.500-4L8 5" fill="none" stroke="#444" stroke-width="2"/></svg>
            <i class="thumb-v"></i>
            <svg width="9" height="6" viewBox="0 0 9 6"><path d="M1 1l3.500 4L8 1" fill="none" stroke="#444" stroke-width="2"/></svg>
        </div>
        <div class="viewbar">
            <button class="scale">1 : 100</button>
            <button aria-label="Detail level"><svg width="16" height="14" viewBox="0 0 16 14"><path d="M.5.5h15v12H.5z" fill="#fff" stroke="#555"/><path d="M1 2h14M1 5h14M1 8h14M1 11h14" stroke="#555" stroke-width="1.500" stroke-dasharray="1.500 1.500"/><path d="M2.500 3.500h13M2.500 6.500h13M2.500 9.500h13" stroke="#555" stroke-width="1.500" stroke-dasharray="1.500 1.500"/></svg></button>
            <button aria-label="Visual style"><svg width="15" height="13" viewBox="0 0 15 13"><path d="M1 5l4-4h9v7l-4 4H1zM1 5h9v7M10 5l4-4" fill="#fff" stroke="#333a45"/></svg></button>
            <button aria-label="Sun path"><svg width="16" height="15" viewBox="0 0 16 15"><path d="M6 0v12M0 6h12M2 2l8 8M10 2l-8 8" stroke="#d99a20"/><circle cx="6" cy="6" r="3.500" fill="#ffe06a" stroke="#c98a10"/><use href="#rx" x="7" y="6" width="8" height="8"/></svg></button>
            <button aria-label="Shadows"><svg width="15" height="14" viewBox="0 0 15 14"><circle cx="6" cy="5" r="4.500" fill="#bfdcf5" stroke="#2a6cb0"/><path d="M1 12h8" stroke="#333" stroke-width="2"/><use href="#rx" x="7" y="6" width="8" height="8"/></svg></button>
            <button aria-label="Crop view"><svg width="17" height="14" viewBox="0 0 17 14"><path d="M0 10h3M4 13V3h11M8 13V6M11 6v6" fill="none" stroke="#2a6cb0" stroke-width="2"/><use href="#rx" x="8" y="5" width="8" height="8"/></svg></button>
            <button aria-label="Show crop"><svg width="17" height="14" viewBox="0 0 17 14"><path d="M0 10h3M4 13V3h8M8 13V6" fill="none" stroke="#2a6cb0" stroke-width="2"/><circle cx="13" cy="6" r="3" fill="#d5eafc" stroke="#2a6cb0"/><path d="M13 9v4" stroke="#333" stroke-width="2"/></svg></button>
            <button aria-label="Temporary hide"><svg width="16" height="12" viewBox="0 0 16 12"><path d="M1 3c0 3 1 5 3 5M8 6l2-1M11 1c3-1 5 1 4 4" fill="none" stroke="#333"/><circle cx="6" cy="8" r="2.500" fill="#fff" stroke="#333"/><circle cx="12" cy="6" r="2.500" fill="#fff" stroke="#333"/></svg></button>
            <button aria-label="Reveal hidden"><svg width="8" height="13"><use href="#bulb"/></svg></button>
            <button aria-label="View properties"><svg width="15" height="14" viewBox="0 0 15 14"><path d="M1 2h11v9H1z" fill="#fff" stroke="#222" stroke-dasharray="2 1"/><path d="M7 5h7v8H7z" fill="#e0e0e0" stroke="#222"/><circle cx="10.500" cy="9" r="2" fill="#fff" stroke="#222"/></svg></button>
            <button aria-label="Analytical model"><svg width="16" height="14" viewBox="0 0 16 14"><path d="M2 13V5h9v8M5 5v8M8 5v8M1 9h11" fill="none" stroke="#333"/><path d="M2 5h8" stroke="#c33" stroke-width="2"/><circle cx="12" cy="5" r="3" fill="#ffc13a" stroke="#c77a10"/></svg></button>
            <button aria-label="Constraints"><svg width="16" height="13" viewBox="0 0 16 13"><path d="M1 0v13M14 0v4M1 3h13" fill="none" stroke="#333"/><path d="M3 10h5" stroke="#333" stroke-dasharray="1 1"/><path d="M9 7h6v6H9z" fill="#444"/><path d="M10 7V4h4v3" fill="none" stroke="#444"/></svg></button>
            <svg width="6" height="9" viewBox="0 0 6 9"><path d="M5 1L1 4.500 5 8" fill="none" stroke="#333" stroke-width="2"/></svg>
            <div class="hscroll"><i></i></div>
            <svg width="6" height="9" viewBox="0 0 6 9"><path d="M1 1l4 3.500L1 8" fill="none" stroke="#444" stroke-width="2"/></svg>
            <svg class="grip" width="8" height="8" viewBox="0 0 8 8"><path d="M6 0h2v2H6zM3 3h2v2H3zM6 3h2v2H6zM0 6h2v2H0zM3 6h2v2H3zM6 6h2v2H6z" fill="#bbb"/></svg>
        </div>
    </section>

    <aside class="browser">
        <div class="palette-head">Project Browser - Villa Revit.rvt<button aria-label="Close browser"><svg width="10" height="10"><use href="#cross"/></svg></button></div>
        <ul class="tree">
            <li><div class="row"><button class="toggle" aria-label="Collapse"></button><i></i><svg width="16" height="16" viewBox="0 0 16 16"><path d="M4 1H1v3M12 1h3v3M4 15H1v-3M12 15h3v-3" fill="none" stroke="#3b414d"/><path d="M4 7l2-2h6v5l-2 2H4zM4 7h6v5" fill="#fff" stroke="#3b414d"/></svg><span>Views (all)</span></div>
                <ul>
                    <li><div class="row"><button class="toggle" aria-label="Collapse"></button><i></i><span>Floor Plans</span></div>
                        <ul>
                            <li><div class="row leaf"><i></i><span>Level 0</span></div></li>
                            <li><div class="row leaf"><i></i><span class="picked">Level 1</span></div></li>
                            <li><div class="row leaf"><i></i><span>Site</span></div></li>
                        </ul>
                    </li>
                    <li><div class="row"><button class="toggle plus" aria-label="Expand"></button><i></i><span>Ceiling Plans</span></div></li>
                    <li><div class="row"><button class="toggle" aria-label="Collapse"></button><i></i><span>3D Views</span></div>
                        <ul>
                            <li><div class="row leaf"><i></i><span>{3D}</span></div></li>
                        </ul>
                    </li>
                    <li><div class="row"><button class="toggle" aria-label="Collapse"></button><i></i><span>Elevations (12mm Circle)</span></div>
                        <ul>
                            <li><div class="row leaf"><i></i><span>East</span></div></li>
                            <li><div class="row leaf"><i></i><span>North</span></div></li>
                            <li><div class="row leaf"><i></i><span>South</span></div></li>
                            <li><div class="row leaf"><i></i><span>West</span></div></li>
                        </ul>
                    </li>
                </ul>
            </li>
            <li><div class="row"><button class="toggle plus" aria-label="Expand"></button><i></i><svg width="16" height="16" viewBox="0 0 16 16"><path d="M.5.5h15v15H.5z" fill="#dfe3e7" stroke="#3b414d"/><path d="M0 2h16" stroke="#3b414d" stroke-width="4"/><path d="M3 6h3v3H3z" fill="#3b414d"/><circle cx="4.500" cy="12.500" r="1.500" fill="#3b414d"/><path d="M8 6h6M8 8h5M8 12h6M8 14h4" stroke="#3b414d"/></svg><span>Legends</span></div></li>
            <li><div class="row"><button class="toggle plus" aria-label="Expand"></button><i></i><svg width="16" height="16" viewBox="0 0 16 16"><path d="M1 2h14v12H1z" fill="#f4f4f4" stroke="#3b414d"/><path d="M1 3.500h14" stroke="#3b414d" stroke-width="3"/><path d="M1 8h14M1 11h14M5 4v10M10 4v10" stroke="#777f8a"/></svg><span>Schedules/Quantities (all)</span></div></li>
            <li><div class="row"><button class="toggle" aria-label="Collapse"></button><i></i><svg width="16" height="16" viewBox="0 0 16 16"><path d="M.5 2.500h11l4 4v7H.5z" fill="#eef0f2" stroke="#3b414d"/><path d="M3 5h7v3H6v3H3zM12 2v4h3M8 10h3M13 8v5" fill="none" stroke="#3b414d"/></svg><span>Sheets (all)</span></div>
                <ul>
                    <li><div class="row leaf"><i></i><span>A100 - Unnamed</span></div></li>
                </ul>
            </li>
            <li><div class="row"><button class="toggle plus" aria-label="Expand"></button><i></i><svg width="16" height="16" viewBox="0 0 16 16"><path d="M2 1h6v6H2zM10 1h4v13H2V9h8z" fill="#eef0f2" stroke="#3b414d"/></svg><span>Families</span></div></li>
            <li><div class="row"><button class="toggle plus" aria-label="Expand"></button><i></i><svg width="16" height="16" viewBox="0 0 16 16"><path d="M3 1H1v14h2M13 1h2v14h-2" fill="none" stroke="#3b414d"/><path d="M7 6h6v7H7z" fill="#c8d4e0" stroke="#3b414d"/><circle cx="7" cy="7" r="3.500" fill="#b4c0cc" fill-opacity=".8" stroke="#3b414d"/></svg><span>Groups</span></div></li>
            <li><div class="row leaf root"><i></i><svg width="16" height="16" viewBox="0 0 16 16"><g fill="none" stroke="#8a6410" stroke-width="3"><rect x="1.500" y="5.500" width="6" height="5" rx="2.500"/><rect x="8.500" y="5.500" width="6" height="5" rx="2.500"/></g><g fill="none" stroke="#f7c531" stroke-width="1.500"><rect x="1.500" y="5.500" width="6" height="5" rx="2.500"/><rect x="8.500" y="5.500" width="6" height="5" rx="2.500"/><path d="M5 8h6"/></g></svg><span>Revit Links</span></div></li>
        </ul>
    </aside>
</main>

<footer class="status">
    <div class="hint">Click to select, TAB for alternates, CTRL adds, SHIFT unselects.</div>
    <div class="status-mid">
        <svg width="16" height="18" viewBox="0 0 16 18"><path d="M4 2h8v6H4zM1 7h4v10H1zM6 9h4v8H6zM11 7h4v10h-4z" fill="#999" stroke="#f2f2f2"/></svg>
        <div class="combo plain"><select aria-label="Active workset"><option></option></select><svg width="9" height="6"><use href="#down"/></svg></div>
        <svg width="17" height="18" viewBox="0 0 17 18"><path d="M6 1h9v5h-4l-1 2H6z" fill="#bbb" stroke="#f4f4f4"/><path d="M2 17l2-6 4 0 2 6z" fill="#8a8a8a"/><path d="M5 9l3-2" stroke="#8a8a8a" stroke-width="2"/></svg>
        <span class="count">:0</span>
        <svg width="16" height="16" viewBox="0 0 16 16"><rect x=".5" y="1.500" width="15" height="14" rx="1" fill="#fff" stroke="#2d3440"/><path d="M1 3h14" stroke="#2d3440" stroke-width="3"/><path d="M3 7h3M3 10h3M3 13h3M8 7h5M8 10h5M8 13h5" stroke="#2d3440"/></svg>
        <svg width="16" height="17" viewBox="0 0 16 17"><path d="M4 1h11v15H0l4-5z" fill="#999"/><path d="M3 4l7 8v-5M10 12H5M15 1v15H0" fill="none" stroke="#eee"/></svg>
        <div class="combo plain"><select aria-label="Design option"><option>Main Model</option></select><svg width="9" height="6"><use href="#down"/></svg></div>
    </div>
    <div class="status-right">
        <button aria-label="Select links"><svg width="18" height="18" viewBox="0 0 18 18"><g fill="none" stroke="#e0a818" stroke-width="2"><circle cx="5" cy="4" r="3"/><circle cx="12" cy="4" r="3"/></g><use href="#arrow" x="6" y="5" width="9" height="13"/></svg></button>
        <button aria-label="Select underlay"><svg width="18" height="18" viewBox="0 0 18 18"><path d="M1 13L9 3v10zM1 16h9" fill="#bfe0f3" stroke="#1d6ca8"/><use href="#rx" x="9" y="0" width="8" height="8"/><use href="#arrow" x="8" y="6" width="8" height="12"/></svg></button>
        <button aria-label="Select pinned"><svg width="18" height="18" viewBox="0 0 18 18"><path d="M2 1h9v3l-2 1v3l3 2v2H1v-2l3-2V5L2 4z" fill="#ef8a3a" stroke="#a04a10"/><path d="M6 12v5" stroke="#444"/><use href="#arrow" x="8" y="6" width="8" height="12"/></svg></button>
        <button aria-label="Select by face"><svg width="18" height="18" viewBox="0 0 18 18"><path d="M1 4l8-3v13l-8 3z" fill="#8fcaf0" stroke="#1d6ca8"/><use href="#rx" x="9" y="0" width="8" height="8"/><use href="#arrow" x="8" y="6" width="8" height="12"/></svg></button>
        <button aria-label="Drag on selection"><svg width="18" height="18" viewBox="0 0 18 18"><path d="M6 0v12M0 6h12M4 2l2-2 2 2M4 10l2 2 2-2M2 4L0 6l2 2M10 4l2 2-2 2" fill="none" stroke="#222"/><use href="#arrow" x="8" y="6" width="8" height="12"/></svg></button>
        <svg width="16" height="18" viewBox="0 0 16 18"><circle cx="8" cy="9" r="5" fill="none" stroke="#9c9c9c" stroke-width="3" stroke-dasharray="3 1"/></svg>
        <button class="funnel"><svg width="17" height="18" viewBox="0 0 17 18"><path d="M1 2h15l-6 7v7l-3 1V9z" fill="#c3ccd6" stroke="#3b414d"/></svg>:1</button>
    </div>
</footer>

<footer class="taskbar">
    <button class="start" aria-label="Start"><svg width="16" height="16" viewBox="0 0 16 16"><path d="M0 2l7-1v6.500H0zM8 1l8-1v7.500H8zM0 8.500h7V15l-7-1zM8 8.500h8V16l-8-1z" fill="#fff"/></svg></button>
    <div class="search">
        <svg width="22" height="22" viewBox="0 0 22 22"><circle cx="11" cy="11" r="8.500" fill="none" stroke="#111" stroke-width="2.500"/></svg>
        <input type="text" placeholder="Type here to search" aria-label="Type here to search">
        <svg width="12" height="17" viewBox="0 0 12 17"><path d="M3.500 1h5v10h-5zM1 9v4h10V9M6 13v3M3 16h6" fill="none" stroke="#222"/></svg>
    </div>
    <div class="apps">
        <button aria-label="Task view"><svg width="20" height="16" viewBox="0 0 20 16"><path d="M5 1h10v14H5zM3 3H.5v10H3M17 3h2.500v10H17" fill="none" stroke="#fff" stroke-width="1.300"/></svg></button>
        <button aria-label="Store"><svg width="24" height="24" viewBox="0 0 24 24"><path d="M8 7V4c0-4 8-4 8 0v3" fill="none" stroke="#ddd"/><path d="M1 6h22v15l-2 2H2l-1-2z" fill="#fff"/><path d="M6 10h5v5H6z" fill="#f25022"/><path d="M12 10h5v5h-5z" fill="#7fba00"/><path d="M6 16h5v5H6z" fill="#00a4ef"/><path d="M12 16h5v5h-5z" fill="#ffb900"/></svg></button>
        <button aria-label="Mail"><svg width="24" height="20" viewBox="0 0 24 20"><path d="M0 7l12-7 12 7v13H0z" fill="#fff"/><path d="M1 7h22L12 13l4 4z" fill="#050505"/></svg></button>
        <button class="run" aria-label="File Explorer"><svg width="24" height="22" viewBox="0 0 24 22"><path d="M1 3l1-2h7l2 2h11v17H1z" fill="#f8d775"/><path d="M1 7h22v13H1z" fill="#ffe79b"/><path d="M5 21v-7h14v7h-4v-4H9v4z" fill="#39a9e0"/></svg></button>
        <button aria-label="Remote desktop"><svg width="24" height="24" viewBox="0 0 24 24"><path d="M8 2l14 4v13L8 13z" fill="#4ab4f0"/><path d="M8 2l14 4-14 7z" fill="#86d2fa"/><path d="M6 14l10 4-4 2-10-4zM2 19l8 3-3 2-6-3z" fill="#d8dce0"/></svg></button>
        <button class="square ps">Ps</button>
        <button aria-label="Edge"><svg width="22" height="23" viewBox="0 0 22 23"><path d="M1 10C3 0 20-3 21 11v3H7c1 6 9 5 12 2v5C12 25 2 22 3 13c1-4 3-6 6-7-3 2-3 3-2 4h7c0-6-9-5-13 0z" fill="#1583e0"/></svg></button>
        <button class="run" aria-label="Chrome"><svg width="23" height="23" viewBox="0 0 24 24"><circle cx="12" cy="12" r="11.500" fill="#fbc116"/><path d="M12 12L2 6a11.500 11.500 0 0 1 20.500 0z" fill="#e33b2e"/><path d="M12 12l-2 11.300A11.500 11.500 0 0 1 2 6z" fill="#2da94f"/><circle cx="12" cy="12" r="5.500" fill="#fff"/><circle cx="12" cy="12" r="4.300" fill="#4285f4"/></svg></button>
        <button aria-label="Instagram"><svg width="24" height="24" viewBox="0 0 24 24"><path d="M0 0h24v24H0z" fill="#cf332e"/><rect x="6.500" y="6.500" width="11" height="11" rx="3" fill="none" stroke="#fff" stroke-width="1.500"/><circle cx="12" cy="12" r="2.500" fill="none" stroke="#fff" stroke-width="1.300"/></svg></button>
        <button aria-label="Player"><svg width="24" height="24" viewBox="0 0 24 24"><path d="M3 3c6-4 15-3 18 2 3 6 0 11-7 12l-3-8z" fill="#17304f"/><path d="M1 4c7-3 12-1 12 5 0 7-4 9-5 15H2c5-8 6-15-1-20z" fill="#f58a1f"/><circle cx="17" cy="11" r="3" fill="#0c1a2c"/><path d="M15 8l4-7" stroke="#f58a1f"/></svg></button>
        <button aria-label="VLC"><svg width="22" height="24" viewBox="0 0 22 24"><path d="M9 1h4l4 17H5z" fill="#f08a1a"/><path d="M8 6h6l1 4H7zM6 13h10l1 4H5z" fill="#f4f4f4"/><path d="M3 18h16l2 5H1z" fill="#f5921e"/></svg></button>
        <button class="square pr">Pr</button>
        <button class="run current" aria-label="Revit"><svg width="24" height="24" viewBox="0 0 24 24"><path d="M0 0h24v24H0z" fill="#e9f0f8"/><path d="M6 3h8c6 0 7 9 1 10l5 8h-5l-4-8v7H7z" fill="#2f6fb5"/><path d="M6 3v18l4-1V6z" fill="#174a86"/><path d="M11 6h3c2 0 2 4 0 4h-3z" fill="#e9f0f8"/></svg></button>
        <button class="run" aria-label="AutoCAD"><svg width="24" height="24" viewBox="0 0 24 24"><path d="M0 0h24v24H0z" fill="#f7ebe8"/><path d="M9 2h6l6 19h-5l-1-5H8l-3 5H2z" fill="#c1272d"/><path d="M12 7l2 6H9z" fill="#f7ebe8"/><path d="M9 2L2 21l4-2 5-13z" fill="#8c151b"/></svg></button>
        <button class="run" aria-label="Spotify"><svg width="23" height="23" viewBox="0 0 24 24"><circle cx="12" cy="12" r="12" fill="#1ed760"/><path d="M5 8c5-2 10-1 14 1M6 12c4-1 8-1 12 1M7 16c3-1 6-1 9 1" fill="none" stroke="#0a0a0a" stroke-width="2"/></svg></button>
        <button class="run" aria-label="Keyboard"><svg width="24" height="24" viewBox="0 0 24 24"><rect x="1.500" y="1.500" width="21" height="21" rx="3" fill="#0a0a0a" stroke="#4ccbee" stroke-width="2"/><path d="M5 7h14v10H5z" fill="#4e5357"/><path d="M6 9h12M6 12h12M8 15h8" stroke="#ddd" stroke-dasharray="2 1"/></svg></button>
    </div>
    <div class="tray">
        <svg width="16" height="18" viewBox="0 0 16 18"><g fill="none" stroke="#fff" stroke-width="1.300"><circle cx="10" cy="4" r="3"/><circle cx="5" cy="9" r="2.500"/><path d="M1 17c0-7 8-7 8 0M9 9c3-2 6-1 6 4"/></g></svg>
        <svg class="people-gap" width="12" height="8" viewBox="0 0 12 8"><path d="M1 7l5-5 5 5" fill="none" stroke="#fff" stroke-width="1.500"/></svg>
        <svg width="16" height="14" viewBox="0 0 16 14"><path d="M4 4h10v7H4M15 6v3" fill="none" stroke="#fff"/><path d="M1 1v3h4V1M3 4v8M7 6l4 4M11 6l-4 4" fill="none" stroke="#fff"/></svg>
        <svg width="16" height="14" viewBox="0 0 16 14"><path d="M1 5h3l4-4v12L4 9H1zM10 5c1 1 1 3 0 4M12 3c2 2 2 6 0 8M14 1c3 3 3 9 0 12" fill="none" stroke="#fff"/></svg>
        <svg width="16" height="15" viewBox="0 0 16 15"><path d="M4 2h11v8H5M9 10v4M5 14h8" fill="none" stroke="#fff"/><path d="M1 1h3v4H1zM2.500 5v9" fill="none" stroke="#fff"/></svg>
        <span>ENG</span>
        <div class="clock">12:33<br>19/03/2019</div>
        <svg class="note" width="17" height="17" viewBox="0 0 17 17"><path d="M1 1h15v12h-5l-2.500 3L6 13H1z" fill="none" stroke="#fff" stroke-width="1.300"/></svg>
        <i class="peek"></i>
    </div>
</footer>

</body>
</html>
```

FILE: styles.css
```
* {
    box-sizing: border-box;
}

body {
    margin: 0;
    height: 100vh;
    display: flex;
    flex-direction: column;
    overflow: hidden;
    font-family: "Open Sans", "Noto Sans", sans-serif;
    font-size: 11px;
    color: #1e1e1e;
    background-color: #cccccc;
}

button, input, select {
    font: inherit;
    color: inherit;
    margin: 0;
    padding: 0;
    border: none;
    background: none;
}

svg {
    flex: none;
}

.defs {
    position: absolute;
    width: 0;
    height: 0;
}

/* title bar */
.titlebar {
    display: grid;
    grid-template-columns: 1fr auto 1fr;
    height: 29px;
    flex: none;
    background-color: #808080;
    color: #f0f0f0;
}

.quick, .account {
    display: flex;
    align-items: center;
    height: 24px;
}

.quick button {
    width: 24px;
    height: 24px;
    display: flex;
    align-items: center;
    justify-content: center;
}

.quick .logo {
    width: 28px;
}

.quick .drop {
    width: 12px;
    color: #444;
}

.quick .letter {
    font-size: 18px;
    font-weight: 600;
    color: #333a45;
}

.ink {
    color: #333a45;
}

.sep {
    width: 1px;
    height: 22px;
    margin: 0 3px;
    background-color: #9c9c9c;
}

.title {
    padding: 1px 22px 0 0;
    font-size: 12px;
    white-space: nowrap;
}

.account {
    justify-content: flex-end;
}

.account input {
    width: 180px;
    height: 22px;
    margin-left: 6px;
    padding: 0 4px;
    border: 1px solid #000;
    background-color: #fff;
    color: #222;
}

.account input::placeholder {
    font-style: italic;
    color: #666;
}

.account button {
    width: 24px;
    height: 24px;
    display: flex;
    align-items: center;
    justify-content: center;
}

.account .user {
    width: 121px;
    gap: 4px;
    justify-content: flex-start;
    padding-left: 4px;
}

.user .far {
    margin-left: auto;
    margin-right: 8px;
    color: #444;
}

.account .help {
    width: 17px;
    height: 17px;
    margin: 0 7px;
    border: 1px solid #2d3440;
    border-radius: 50%;
    background-color: #fff;
    color: #1f55b0;
    font-weight: bold;
    font-size: 12px;
}

.tiny {
    margin: 0 8px 0 2px;
    color: #444;
}

.account .win {
    width: 26px;
}

.white {
    color: #fff;
}

/* ribbon tabs */
.ribbon-tabs {
    display: flex;
    height: 20px;
    flex: none;
    background-color: #808080;
    color: #f0f0f0;
}

.ribbon-tabs button {
    padding: 0 11px 2px;
    white-space: nowrap;
}

.ribbon-tabs .file {
    width: 45px;
    background-color: #2a7ab5;
}

.ribbon-tabs .active {
    background-color: #e5efd7;
    color: #1e1e1e;
}

.ribbon-tabs .collapse {
    padding: 2px 22px 0;
}

/* ribbon */
.ribbon {
    display: flex;
    gap: 1px;
    height: 96px;
    flex: none;
    padding: 1px 0;
    background-color: #e5efd7;
    border-bottom: 1px solid #808080;
    color: #333;
}

.panel {
    display: flex;
    flex-direction: column;
    background-color: #ededed;
}

.panel h3 {
    margin: 0;
    height: 20px;
    font-size: 11px;
    font-weight: normal;
    line-height: 20px;
    text-align: center;
}

.panel h3 svg {
    margin: 0 0 2px 4px;
}

.body {
    flex: 1;
    display: flex;
    padding-top: 2px;
}

.panel button {
    display: flex;
    align-items: center;
    justify-content: center;
}

.select {
    width: 56px;
}

.select .body {
    padding: 2px 5px 2px 7px;
}

.panel .modify {
    flex: 1;
    flex-direction: column;
    justify-content: flex-start;
    gap: 6px;
    padding-top: 7px;
    border: 1px solid #1a6fc4;
    background-color: #b8d6f3;
}

.props {
    width: 63px;
}

.two {
    flex-direction: column;
    align-items: center;
}

.two button {
    height: 36px;
}

.props .on {
    width: 38px;
    border: 1px solid #1a6fc4;
    background-color: #b8d6f3;
}

.clip {
    width: 79px;
}

.clip .body {
    padding-left: 4px;
}

.panel .tall {
    flex: 1;
    flex-direction: column;
    justify-content: flex-start;
    padding-top: 2px;
    line-height: 15px;
}

.tall > svg:first-child {
    margin-bottom: 4px;
}

.tall > svg:last-child:not(:first-child) {
    margin-top: 1px;
}

.off {
    color: #a0a0a0;
}

.three {
    display: flex;
    flex-direction: column;
    width: 25px;
}

.three button {
    height: 24px;
}

.clip .three {
    width: 28px;
}

.geometry {
    width: 138px;
}

.three.named {
    width: 73px;
    padding-left: 6px;
}

.named button {
    gap: 5px;
    justify-content: flex-start;
}

.named svg:last-child {
    margin-left: 3px;
}

.mid {
    align-self: center;
    margin-left: 1px;
}

.edit {
    width: 238px;
}

.edit .body {
    padding-left: 2px;
}

.big-grid {
    display: grid;
    grid-template-columns: repeat(4, 39px);
    grid-auto-rows: 36px;
}

.small-grid {
    display: grid;
    grid-template-columns: repeat(3, 25px);
    grid-auto-rows: 24px;
    margin-left: 3px;
}

.view {
    width: 64px;
}

.view .three:first-child {
    width: 37px;
    padding-left: 7px;
}

.panel .drops {
    gap: 6px;
    justify-content: flex-start;
}

.measure {
    width: 55px;
}

.create {
    width: 81px;
}

.quad {
    display: grid;
    grid-template-columns: repeat(2, 37px);
    grid-auto-rows: 36px;
    padding-left: 3px;
}

.import {
    width: 144px;
    margin-left: 3px;
}

.import h3 {
    background-color: #e5efd7;
}

.options {
    height: 28px;
    flex: none;
    padding: 6px 8px 0;
    background-color: #e5efd7;
    border-bottom: 2px solid #cccccc;
    color: #9b9f96;
}

/* palettes */
.workspace {
    flex: 1;
    min-height: 0;
    display: grid;
    grid-template-columns: 219px 1fr 210px;
    gap: 2px;
}

.palette-head {
    display: flex;
    align-items: center;
    justify-content: space-between;
    height: 20px;
    flex: none;
    padding: 0 3px;
    background-color: #ededed;
    color: #333;
}

.palette-head button {
    height: 10px;
    display: flex;
}

.properties {
    display: flex;
    flex-direction: column;
    background-color: #ededed;
    min-height: 0;
}

.properties .palette-head {
    padding-right: 5px;
}

.type-box {
    display: flex;
    align-items: center;
    gap: 4px;
    height: 72px;
    margin: 0 2px 0 1px;
    padding: 2px;
    border: 1px solid #cccccc;
    text-align: left;
    line-height: 16px;
    color: #333;
}

.thumb {
    width: 66px;
    height: 66px;
    border: 1px solid #cccccc;
}

.type-name {
    flex: 1;
    white-space: nowrap;
}

.type-row {
    display: flex;
    height: 24px;
    padding: 1px 1px 0;
    gap: 6px;
}

.combo {
    display: grid;
    grid-template-columns: 1fr 20px;
    align-items: center;
}

.combo select {
    grid-area: 1 / 1 / 2 / 3;
    width: 100%;
    height: 100%;
    padding: 0 18px 0 3px;
    appearance: none;
}

.combo svg {
    grid-area: 1 / 2;
    color: #555;
    justify-self: center;
    pointer-events: none;
}

.filter {
    width: 134px;
    border: 1px solid #adadad;
    background-color: #e1e1e1;
    color: #000;
}

.edit-type {
    display: flex;
    align-items: center;
    gap: 4px;
    white-space: nowrap;
}

.grid-area {
    flex: 1;
    margin: 1px 2px 0 1px;
    background-color: #fff;
}

.props-table {
    width: 100%;
    table-layout: fixed;
    border-collapse: separate;
    border-spacing: 0;
}

.c-name {
    width: 103px;
}

.c-more {
    width: 13px;
}

.props-table th {
    height: 18px;
    padding: 0 2px;
    background-color: #dcdcdc;
    font-weight: normal;
    text-align: left;
    line-height: 17px;
    color: #000;
}

.props-table th + th {
    padding: 0;
}

.props-table th svg {
    display: block;
}

.props-table td {
    height: 18px;
    padding: 0 2px;
    border-bottom: 1px dotted #777;
    border-right: 1px dotted #777;
    white-space: nowrap;
    line-height: 16px;
    color: #000;
}

.props-table td:first-child {
    padding-left: 8px;
}

.props-table td:has(input) {
    padding: 0;
}

.props-table input {
    display: block;
    width: 100%;
    height: 17px;
    padding: 0 2px;
}

.props-table .focus {
    border: 1px solid #000;
    padding: 0 1px;
}

.props-table .dim td {
    color: #777;
}

.props-foot {
    display: flex;
    align-items: center;
    justify-content: space-between;
    height: 28px;
    padding: 0 4px 2px 3px;
}

.props-foot a {
    color: #0066cc;
}

.props-foot button {
    width: 73px;
    height: 21px;
    border: 1px solid #bfbfbf;
    background-color: #cccccc;
    color: #8c8c8c;
}

/* drawing area */
.document {
    display: grid;
    grid-template-columns: 1fr 18px;
    grid-template-rows: 20px 1fr 19px;
    min-width: 0;
    min-height: 0;
    background-color: #efefef;
}

.doc-tabs {
    grid-column: 1 / 3;
    display: flex;
    background-color: #cccccc;
    color: #444;
}

.doc-tabs button {
    display: flex;
    align-items: center;
    gap: 7px;
    width: 128px;
    padding: 0 5px;
}

.doc-tabs button svg {
    color: #7c8088;
}

.doc-tabs .current {
    background-color: #fff;
    font-weight: bold;
    color: #333;
}

.doc-tabs .current svg {
    color: #3b414d;
}

.close {
    margin-left: auto;
}

.faded {
    opacity: 0.6;
}

.more {
    margin: 6px 6px 0 auto;
}

.canvas {
    position: relative;
    overflow: hidden;
    background-color: #fff;
}

.drawing {
    display: block;
    width: 100%;
    height: 100%;
}

.lines {
    fill: none;
    stroke: #000;
    shape-rendering: crispEdges;
}

.tags text {
    font-size: 5px;
    font-weight: bold;
    fill: #1a1f33;
}

.tags path {
    fill: none;
    stroke: #9db4ea;
}

.navbar {
    position: absolute;
    top: 2px;
    right: 2px;
    border: 2px solid #c0c0c0;
    border-radius: 5px;
    background-color: #f4f4f4;
}

.navbar svg {
    display: block;
}

.navbar text {
    font-size: 10px;
    font-weight: bold;
    fill: #6f9cc8;
    stroke: none;
}

.vscroll {
    display: flex;
    flex-direction: column;
    align-items: center;
    justify-content: space-between;
    padding: 7px 2px 5px 0;
}

.thumb-v {
    width: 16px;
    height: 17px;
    background-color: #cccccc;
}

.viewbar {
    grid-column: 1 / 3;
    display: flex;
    align-items: center;
    gap: 5px;
    border-bottom: 3px solid #fff;
}

.viewbar button {
    width: 16px;
    display: flex;
    justify-content: center;
    white-space: nowrap;
}

.viewbar .scale {
    width: 76px;
    padding-left: 9px;
    color: #000;
}

.hscroll {
    flex: 1;
    display: flex;
    justify-content: center;
}

.hscroll i {
    width: 17px;
    height: 15px;
    background-color: #cccccc;
}

.grip {
    margin: 6px 5px 0 6px;
}

/* project browser */
.browser {
    display: flex;
    flex-direction: column;
    background-color: #fff;
    border-bottom: 2px solid #ededed;
}

.tree, .tree ul {
    margin: 0;
    padding: 0;
    list-style: none;
}

.tree ul {
    margin-left: 20px;
}

.tree li {
    background-image: repeating-linear-gradient(to bottom, #909090 0 1px, transparent 1px 2px);
    background-size: 1px 100%;
    background-position: 10px 0;
    background-repeat: no-repeat;
}

.tree li:last-child {
    background-size: 1px 10px;
}

.tree > li:first-child {
    background-position: 10px 9px;
}

.row {
    display: flex;
    align-items: center;
    height: 18px;
    padding-left: 6px;
    color: #000;
    white-space: nowrap;
}

.row.leaf {
    padding-left: 11px;
}

.row i {
    width: 10px;
    border-top: 1px dotted #909090;
}

.row.leaf i {
    width: 14px;
}

.tree > li > .row i {
    width: 7px;
}

.tree > li > .root i {
    width: 11px;
}

.row svg {
    margin-right: 4px;
}

.row span {
    padding: 0 3px;
    line-height: 18px;
}

.row .picked {
    background-color: #e0e0e0;
    font-weight: bold;
}

.toggle {
    width: 9px;
    height: 9px;
    border: 1px solid #8a8f98;
    background: linear-gradient(#2a4c9c, #2a4c9c) center / 5px 1px no-repeat, #fff;
}

.toggle.plus {
    background: linear-gradient(#2a4c9c, #2a4c9c) center / 5px 1px no-repeat, linear-gradient(#2a4c9c, #2a4c9c) center / 1px 5px no-repeat, #fff;
}

/* status bar */
.status {
    display: flex;
    align-items: center;
    height: 24px;
    flex: none;
    padding: 0 62px 0 2px;
    color: #000;
}

.hint {
    width: 896px;
    white-space: nowrap;
}

.status-mid {
    display: flex;
    align-items: center;
    gap: 7px;
    height: 23px;
    padding-left: 6px;
    border-left: 1px solid #dedede;
}

.count {
    width: 26px;
}

.plain {
    width: 204px;
    height: 19px;
    background-color: #fff;
    color: #777;
}

.plain svg {
    color: #aaa;
}

.status-right {
    display: flex;
    align-items: center;
    gap: 8px;
    margin-left: auto;
}

.status-right button {
    display: flex;
    align-items: center;
}

/* windows taskbar */
.taskbar {
    display: flex;
    height: 40px;
    flex: none;
    background-color: #050607;
    color: #fff;
}

.start {
    width: 48px;
}

.search {
    display: flex;
    align-items: center;
    gap: 9px;
    width: 344px;
    padding: 0 14px 0 9px;
    background-color: #f2f2f2;
}

.search input {
    flex: 1;
    font-size: 14px;
}

.search input::placeholder {
    color: #444;
}

.apps {
    display: flex;
    gap: 1px;
    padding-left: 1px;
}

.apps button {
    width: 48px;
    display: flex;
    align-items: center;
    justify-content: center;
}

.apps .run {
    background: linear-gradient(#f9a9a9, #f9a9a9) bottom / 40px 2px no-repeat;
}

.apps .current {
    background: linear-gradient(#f9a9a9, #f9a9a9) bottom / 100% 2px no-repeat, #3a3b3c;
}

.apps .square {
    width: 22px;
    height: 22px;
    margin: 8px 13px;
    border: 1px solid #26c5f5;
    background-color: #001d26;
    color: #26c5f5;
    font-size: 12px;
}

.apps .pr {
    border-color: #d76cff;
    background-color: #2a0033;
    color: #d76cff;
}

.tray {
    display: flex;
    align-items: center;
    gap: 9px;
    margin-left: auto;
    padding-right: 3px;
}

.people-gap {
    margin: 0 1px 0 13px;
}

.clock {
    width: 66px;
    text-align: center;
    line-height: 18px;
}

.note {
    margin: 0 11px 0 5px;
}

.peek {
    width: 1px;
    height: 40px;
    background-color: #555;
}
```
